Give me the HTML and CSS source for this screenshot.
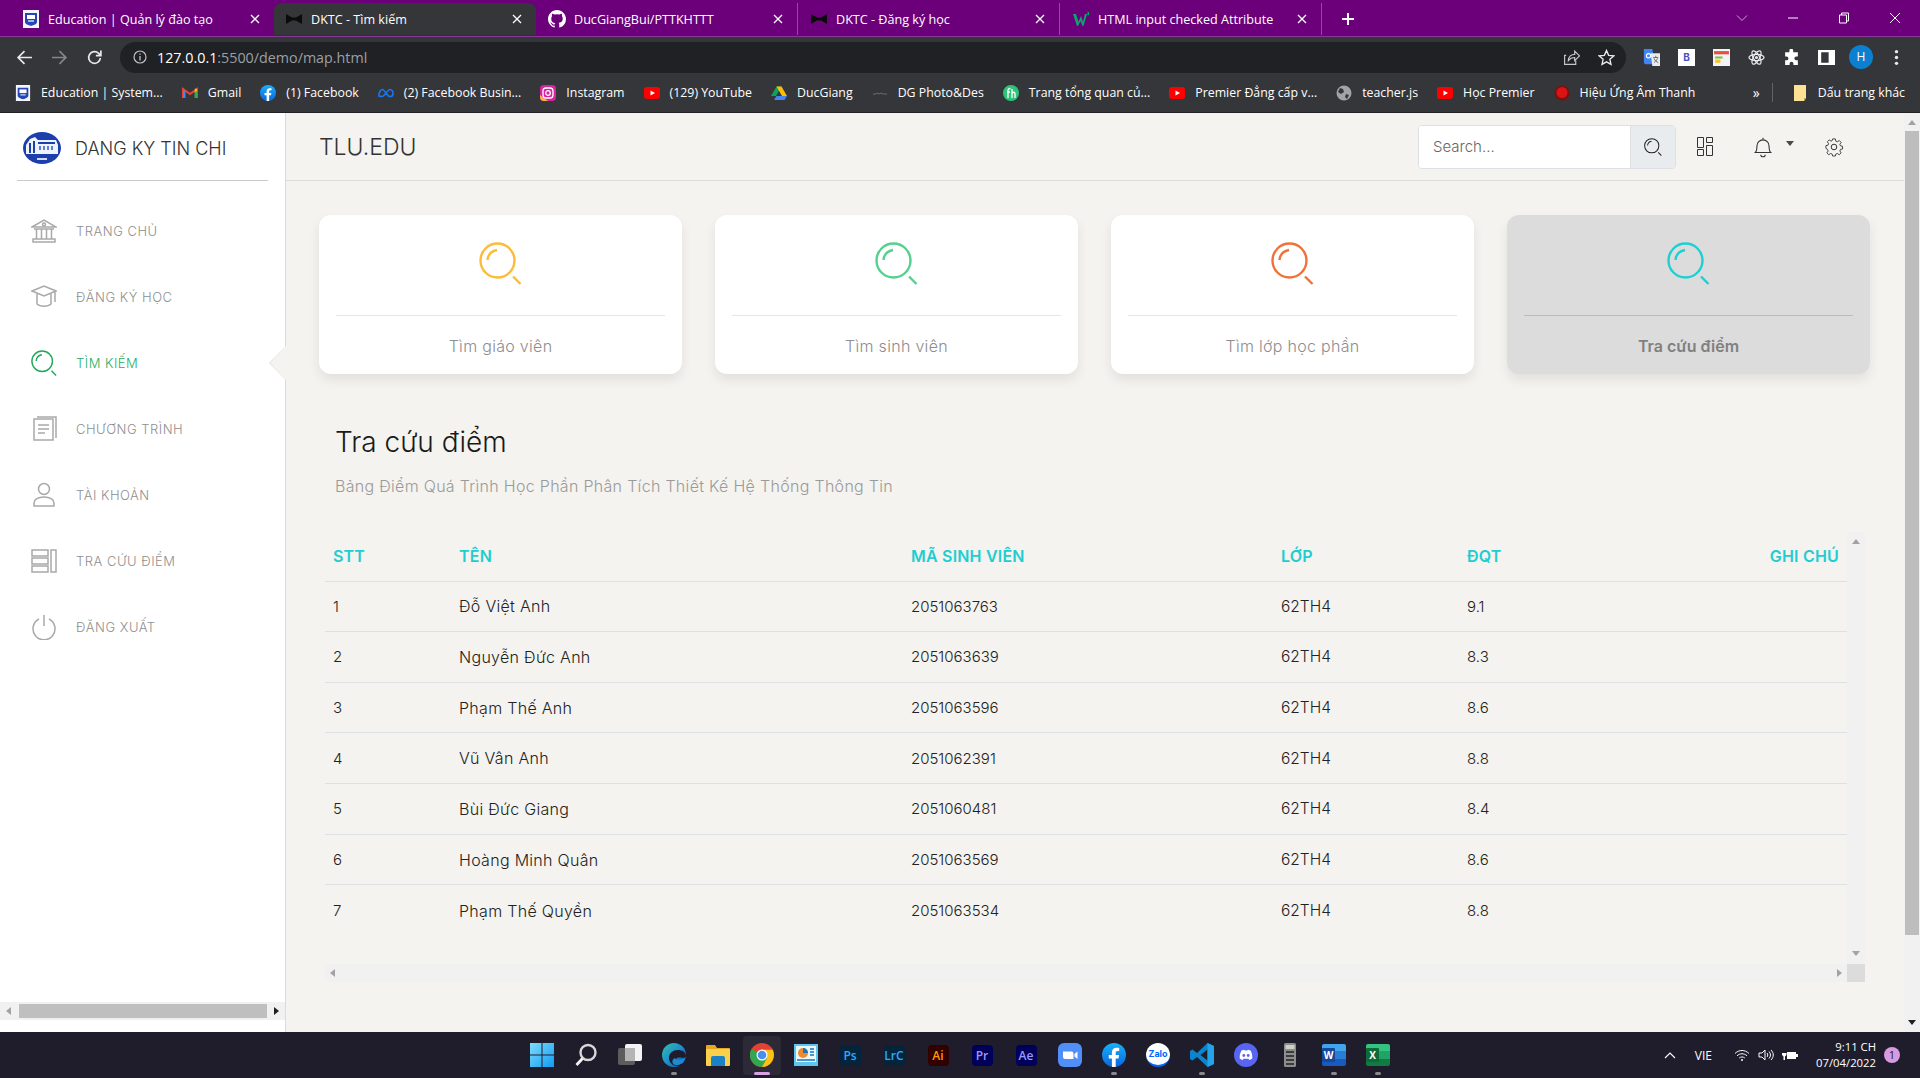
FILE: index.html
```html
<!DOCTYPE html>
<html lang="vi">
<head>
  <meta charset="UTF-8">
  <title>DKTC - Tìm kiếm</title>
  <link rel="stylesheet" href="styles.css">
</head>
<body>

  <!-- bo icon dung chung -->
  <svg class="defs" aria-hidden="true">
    <defs>
      <linearGradient id="g-win" x1="0" y1="0" x2="1" y2="1"><stop offset="0" stop-color="#7fdcff"/><stop offset="1" stop-color="#0f9bf0"/></linearGradient>
      <linearGradient id="g-edge" x1="0" y1="0" x2="1" y2="1"><stop offset="0" stop-color="#35c1a0"/><stop offset=".5" stop-color="#1c8fd0"/><stop offset="1" stop-color="#0c4f9e"/></linearGradient>
      <linearGradient id="g-fb" x1="0" y1="0" x2="0" y2="1"><stop offset="0" stop-color="#19b0f8"/><stop offset="1" stop-color="#0a66e0"/></linearGradient>
      <symbol id="i-find" viewBox="0 0 43 43"><circle cx="18.5" cy="18.5" r="17" fill="none" stroke="currentColor" stroke-width="2.400"/><path d="M8.500 18C9 13 12.500 9 18 8M34 34.500l7.500 7.500" fill="none" stroke="currentColor" stroke-width="2.400"/></symbol>
      <symbol id="i-x" viewBox="0 0 10 10"><path d="M1 1l8 8M9 1l-8 8" fill="none" stroke="currentColor" stroke-width="1.3"/></symbol>
      <symbol id="i-edu" viewBox="0 0 18 18"><rect x="1" y="0" width="16" height="18" fill="#f4f6fb"/><path d="M3 3h12v9c0 2-3 3-6 4-3-1-6-2-6-4z" fill="#2745b4"/><path d="M5 5h8v4H5z" fill="#fff"/><path d="M6 10h6v2H6z" fill="#9fb4ea"/></symbol>
      <symbol id="i-bow" viewBox="0 0 18 18"><path d="M1 4l6 3.500h4L17 4v10l-6-3.500H7L1 14z" fill="#0b0b0b"/></symbol>
      <symbol id="i-github" viewBox="0 0 16 16"><path fill="#fff" d="M8 0C3.600 0 0 3.600 0 8c0 3.500 2.300 6.500 5.500 7.600.4.100.5-.2.500-.4v-1.400c-2.200.5-2.700-1-2.700-1-.4-.9-.9-1.200-.9-1.200-.7-.5.1-.5.100-.5.800.1 1.200.8 1.200.8.700 1.200 1.900.9 2.300.7.100-.5.300-.9.500-1.100-1.800-.2-3.600-.9-3.600-4 0-.9.300-1.600.8-2.100-.1-.2-.4-1 .1-2.100 0 0 .7-.2 2.200.8a7.600 7.600 0 0 1 4 0c1.500-1 2.200-.8 2.200-.8.400 1.100.2 1.900.1 2.100.5.600.8 1.300.8 2.100 0 3.100-1.900 3.700-3.700 3.900.3.300.6.800.6 1.500v2.200c0 .2.100.5.600.4A8 8 0 0 0 16 8c0-4.400-3.600-8-8-8z"/></symbol>
      <symbol id="i-w3" viewBox="0 0 18 18"><path d="M1 4h3l2.500 8L9 6l2 6 2-8h2l-3.500 12h-1L8.500 11 6 16H5z" fill="#04aa6d"/><path d="M15.500 2h1.500v3h-1.500z" fill="#04aa6d"/></symbol>
      <symbol id="i-gmail" viewBox="0 0 16 16"><path d="M1 13V4l7 5 7-5v9" fill="none" stroke="#ea4335" stroke-width="2"/><path d="M1 5v8h2.500V6z" fill="#4285f4"/><path d="M12.500 6v7H15V5z" fill="#34a853"/><path d="M13 3.500l2 .5v2l-2.500 1.500z" fill="#fbbc04"/></symbol>
      <symbol id="i-fb" viewBox="0 0 24 24"><circle cx="12" cy="12" r="12" fill="url(#g-fb)"/><path d="M16.500 15.500l.6-3.500h-3.400V9.800c0-1 .5-1.900 2-1.900h1.500v-3s-1.400-.2-2.700-.2c-2.800 0-4.600 1.700-4.600 4.700V12H6.800v3.500h3.100V24h3.800v-8.500z" fill="#fff"/></symbol>
      <symbol id="i-meta" viewBox="0 0 18 12"><path d="M1 9c0-3 1.500-7 3.800-7C7.500 2 10.500 10 13.200 10 15.500 10 17 8.500 17 6.500S15.500 2 13.500 2C10.800 2 7.200 10 4.500 10 2.500 10 1 9.800 1 9z" fill="none" stroke="#1877f2" stroke-width="1.800"/></symbol>
      <symbol id="i-insta" viewBox="0 0 16 16"><rect width="16" height="16" rx="4" fill="#d6249f"/><path d="M0 10l8 6H4a4 4 0 0 1-4-4z" fill="#fdb13f"/><rect x="3" y="3" width="10" height="10" rx="3" fill="none" stroke="#fff" stroke-width="1.300"/><circle cx="8" cy="8" r="2.300" fill="none" stroke="#fff" stroke-width="1.300"/></symbol>
      <symbol id="i-yt" viewBox="0 0 16 16"><rect y="2" width="16" height="12" rx="3" fill="#f00"/><path d="M6.500 5.500v5L11 8z" fill="#fff"/></symbol>
      <symbol id="i-drive" viewBox="0 0 16 16"><path d="M5.500 1.500h5L5 11H0z" fill="#0fa15b"/><path d="M5.500 1.500h5L16 11h-5z" fill="#fbbc04"/><path d="M3 15l2.500-4H16l-2.500 4z" fill="#4285f4"/></symbol>
      <symbol id="i-dg" viewBox="0 0 16 16"><path d="M1 9h3l1-1 2 1 2-1 2 1h4" fill="none" stroke="#6d6d6d" stroke-width="1"/></symbol>
      <symbol id="i-fh" viewBox="0 0 16 16"><circle cx="8" cy="8" r="8" fill="#2fc37a"/><path d="M5 13V5.500C5 4 6 3.500 7.500 3.500M4 7h3M9 4v9M9 8c2-1.500 3-.5 3 1v4" fill="none" stroke="#fff" stroke-width="1.300"/></symbol>
      <symbol id="i-globe" viewBox="0 0 16 16"><circle cx="8" cy="8" r="7.500" fill="#a0a3a7"/><path d="M4 3l3 1 1 3-3 2-3-2zM10 9l3 1-2 4-2-2z" fill="#35363a"/></symbol>
      <symbol id="i-sound" viewBox="0 0 16 16"><circle cx="8" cy="8" r="7.500" fill="#7c1010"/><circle cx="8" cy="7.500" r="5.500" fill="#d81414"/></symbol>
      <symbol id="i-folder" viewBox="0 0 14 16"><path d="M1 0h9l3 0v13l-2 3H1z" fill="#fde293"/><path d="M11 16v-3h2z" fill="#c9a64a"/></symbol>
      <symbol id="i-zoom" viewBox="0 0 24 24"><rect width="24" height="24" rx="6" fill="#4f8ff7"/><path d="M5 8.500h8.500a2 2 0 0 1 2 2V16H7a2 2 0 0 1-2-2zM16.500 11l3-2.500v7.500l-3-2.500z" fill="#fff"/></symbol>
      <symbol id="i-discord" viewBox="0 0 24 24"><circle cx="12" cy="12" r="12" fill="#5865f2"/><path d="M7.500 7.500c1-.5 2-.7 2.800-.8l.3.7h2.800l.3-.7c.8.100 1.800.3 2.800.8 1.500 2.500 2 5.500 1.800 8-1 .8-2.100 1.300-3.100 1.500l-.7-1.200H9.500l-.7 1.200c-1-.2-2.100-.7-3.100-1.500-.2-2.500.3-5.500 1.800-8z" fill="#fff"/><circle cx="9.800" cy="12.500" r="1.400" fill="#5865f2"/><circle cx="14.200" cy="12.500" r="1.400" fill="#5865f2"/></symbol>
    </defs>
  </svg>

  <!-- thanh tab cua trinh duyet -->
  <div class="tabbar">
    <div class="tab"><svg class="fav"><use href="#i-edu"/></svg><span class="tab-title">Education | Quản lý đào tạo</span><svg class="tab-x"><use href="#i-x"/></svg></div>
    <div class="tab active"><svg class="fav"><use href="#i-bow"/></svg><span class="tab-title">DKTC - Tìm kiếm</span><svg class="tab-x"><use href="#i-x"/></svg></div>
    <div class="tab sep"><svg class="fav"><use href="#i-github"/></svg><span class="tab-title">DucGiangBui/PTTKHTTT</span><svg class="tab-x"><use href="#i-x"/></svg></div>
    <div class="tab sep"><svg class="fav"><use href="#i-bow"/></svg><span class="tab-title">DKTC - Đăng ký học</span><svg class="tab-x"><use href="#i-x"/></svg></div>
    <div class="tab sep"><svg class="fav"><use href="#i-w3"/></svg><span class="tab-title">HTML input checked Attribute</span><svg class="tab-x"><use href="#i-x"/></svg></div>
    <svg class="tab-plus" viewBox="0 0 14 14"><path d="M7 1v12M1 7h12" stroke="#fff" stroke-width="2"/></svg>
    <div class="win-ctl">
      <svg viewBox="0 0 12 12"><path d="M1 3.500l5 5 5-5" fill="none" stroke="#c9a6d2"/></svg>
      <svg viewBox="0 0 12 12"><path d="M1 6h10" stroke="#fff"/></svg>
      <svg viewBox="0 0 12 12"><path d="M1.500 3h7v8h-7zM3.500 3V1h7v8h-2" fill="none" stroke="#fff"/></svg>
      <svg viewBox="0 0 12 12"><path d="M1 1l10 10M11 1L1 11" fill="none" stroke="#fff"/></svg>
    </div>
  </div>

  <!-- thanh dia chi -->
  <div class="toolbar">
    <svg class="tool" viewBox="0 0 16 16"><path d="M15 8H2M8 2L2 8l6 6" fill="none" stroke="#e8eaed" stroke-width="1.600"/></svg>
    <svg class="tool" viewBox="0 0 16 16"><path d="M1 8h13M8 2l6 6-6 6" fill="none" stroke="#85878b" stroke-width="1.600"/></svg>
    <svg class="tool" viewBox="0 0 16 16"><path d="M13.500 8.500a5.500 5.500 0 1 1-1.600-4.400L14 6.200M14 1.500v4.700H9.300" fill="none" stroke="#e8eaed" stroke-width="1.600"/></svg>
    <div class="address">
      <svg class="addr-info" viewBox="0 0 14 14"><circle cx="7" cy="7" r="6" fill="none" stroke="#bdc1c6" stroke-width="1.200"/><path d="M7 6v4.500M7 3.500v1.300" stroke="#bdc1c6" stroke-width="1.300"/></svg>
      <span class="url"><b>127.0.0.1</b>:5500/demo/map.html</span>
      <svg class="tool" viewBox="0 0 16 16"><path d="M3 6H1.500v8.500H12V11M5 11c0-4 3-6 6-6V2l4.500 4.500L11 11V8c-3 0-4.500 1-6 3z" fill="none" stroke="#c4c7c5" stroke-width="1.100"/></svg>
      <svg class="tool" viewBox="0 0 16 16"><path d="M8 1.500l2 4.500 4.800.5-3.600 3.200 1 4.800L8 12.100l-4.200 2.400 1-4.800-3.600-3.200L6 6z" fill="none" stroke="#e8eaed" stroke-width="1.300"/></svg>
    </div>
    <svg class="tool" viewBox="0 0 20 20"><path d="M1 0h10l3 18H4a3 3 0 0 1-3-3z" fill="#4285f4"/><path d="M9 5h11v15H11z" fill="#e8eaed"/><circle cx="6.500" cy="8" r="2.500" fill="none" stroke="#fff" stroke-width="1.400"/><path d="M12 10h6M15 8v2M13 11c1 3 3 4 5 5M17 11c-1 3-3 4-4 5" fill="none" stroke="#5f6368"/></svg>
    <div class="tool-b">B</div>
    <svg class="tool" viewBox="0 0 16 16"><rect width="16" height="16" fill="#f1f3f4"/><path d="M1 2h14v3H1z" fill="#ea4c3f"/><path d="M2 7h7v2H2z" fill="#7cc04b"/><path d="M2 10h5v3H2z" fill="#fbc02d"/></svg>
    <svg class="tool" viewBox="0 0 18 18"><g fill="none" stroke="#e8eaed" stroke-width="1.300"><ellipse cx="9" cy="9" rx="8" ry="3.200"/><ellipse cx="9" cy="9" rx="8" ry="3.200" transform="rotate(60 9 9)"/><ellipse cx="9" cy="9" rx="8" ry="3.200" transform="rotate(120 9 9)"/></g><circle cx="9" cy="9" r="1.600" fill="#e8eaed"/></svg>
    <svg class="tool" viewBox="0 0 16 16"><path d="M6 1.500a1.800 1.800 0 0 1 3.600 0V3H14v4h-1.500a1.800 1.800 0 0 0 0 3.600H14V15H9.800v-1.300a1.800 1.800 0 0 0-3.600 0V15H2v-4.300h1.300a1.800 1.800 0 0 0 0-3.600H2V3h4z" fill="#fff"/></svg>
    <svg class="tool" viewBox="0 0 16 16"><path d="M0 1h16v14H0zM3 3v10h7V3z" fill="#fff" fill-rule="evenodd"/></svg>
    <div class="avatar-wrap"><div class="avatar">H</div></div>
    <svg class="tool" viewBox="0 0 16 16"><circle cx="8" cy="2.500" r="1.600" fill="#e8eaed"/><circle cx="8" cy="8" r="1.600" fill="#e8eaed"/><circle cx="8" cy="13.500" r="1.600" fill="#e8eaed"/></svg>
  </div>

  <!-- thanh dau trang -->
  <div class="bookmarks">
    <span class="bm"><svg class="bm-ic"><use href="#i-edu"/></svg>Education | System...</span>
    <span class="bm"><svg class="bm-ic"><use href="#i-gmail"/></svg>Gmail</span>
    <span class="bm"><svg class="bm-ic"><use href="#i-fb"/></svg>(1) Facebook</span>
    <span class="bm"><svg class="bm-ic"><use href="#i-meta"/></svg>(2) Facebook Busin...</span>
    <span class="bm"><svg class="bm-ic"><use href="#i-insta"/></svg>Instagram</span>
    <span class="bm"><svg class="bm-ic"><use href="#i-yt"/></svg>(129) YouTube</span>
    <span class="bm"><svg class="bm-ic"><use href="#i-drive"/></svg>DucGiang</span>
    <span class="bm"><svg class="bm-ic"><use href="#i-dg"/></svg>DG Photo&amp;Des</span>
    <span class="bm"><svg class="bm-ic"><use href="#i-fh"/></svg>Trang tổng quan củ...</span>
    <span class="bm"><svg class="bm-ic"><use href="#i-yt"/></svg>Premier Đẳng cấp v...</span>
    <span class="bm"><svg class="bm-ic"><use href="#i-globe"/></svg>teacher.js</span>
    <span class="bm"><svg class="bm-ic"><use href="#i-yt"/></svg>Học Premier</span>
    <span class="bm"><svg class="bm-ic"><use href="#i-sound"/></svg>Hiệu Ứng Âm Thanh</span>
    <span class="bm-more">»</span>
    <span class="bm bm-other"><svg class="bm-ic"><use href="#i-folder"/></svg>Dấu trang khác</span>
  </div>

  <main class="page">
    <aside class="sidebar">
      <div class="brand">
        <svg class="brand-logo" viewBox="0 0 38 32"><ellipse cx="19" cy="16" rx="19" ry="16" fill="#1d3fae"/><path d="M3 22V13l4-6 5-2 3 3h18l2 5v9z" fill="#eef2fb"/><path d="M6 11h2v10H6zM10 9h2v12h-2z" fill="#1d3fae"/><path d="M15 10h17v2H15z" fill="#1d3fae"/><path d="M16 14h2v4h-2zM20 14h2v4h-2zM24 14h2v4h-2zM28 14h2v4h-2z" fill="#5f7fd6"/><path d="M14 26h10v2H14z" fill="#cfd8f4"/></svg>
        <span class="brand-name">DANG KY TIN CHI</span>
      </div>
      <nav class="menu">
        <a class="menu-item"><svg class="menu-ic" viewBox="0 0 26 26"><path d="M1 9l12-7 12 7zM3 11h20M5.500 11v10M10.500 11v10M15.500 11v10M20.500 11v10M2 21h22v3H2z"/><circle cx="13" cy="6.500" r="1.500"/></svg>TRANG CHỦ</a>
        <a class="menu-item"><svg class="menu-ic" viewBox="0 0 26 26"><path d="M1 7l12-5 12 5-12 5zM6 10v10c3 3 11 3 14 0V10M24 8v10"/></svg>ĐĂNG KÝ HỌC</a>
        <a class="menu-item active"><svg class="menu-ic" viewBox="0 0 26 26"><use href="#i-find"/></svg>TÌM KIẾM</a>
        <a class="menu-item"><svg class="menu-ic" viewBox="0 0 26 26"><path d="M3 3h19v21H3zM6 1h19v21M7 9h11M7 13h11M7 17h7"/></svg>CHƯƠNG TRÌNH</a>
        <a class="menu-item"><svg class="menu-ic" viewBox="0 0 26 26"><circle cx="13" cy="7" r="5.500"/><path d="M3 24v-3c0-3.500 4-6 10-6s10 2.500 10 6v3z"/></svg>TÀI KHOẢN</a>
        <a class="menu-item"><svg class="menu-ic" viewBox="0 0 26 26"><path d="M1 2h16v6H1zM1 10h16v6H1zM1 18h16v6H1zM20 2h5v22h-5z"/></svg>TRA CỨU ĐIỂM</a>
        <a class="menu-item"><svg class="menu-ic" viewBox="0 0 26 26"><path d="M8 5a11 11 0 1 0 10 0M13 1v11"/></svg>ĐĂNG XUẤT</a>
      </nav>
      <div class="hbar hbar-side">
        <i class="arr arr-left"></i>
        <div class="hbar-thumb"></div>
        <i class="arr arr-right dark"></i>
      </div>
    </aside>

    <div class="panel">
      <header class="topbar">
        <div class="top-title">TLU.EDU</div>
        <div class="search">
          <input class="search-input" placeholder="Search...">
          <span class="search-btn"><svg viewBox="0 0 43 43"><use href="#i-find"/></svg></span>
        </div>
        <svg class="top-ic ic-layout" viewBox="0 0 16 19"><path d="M.5.500h6v10h-6zM.5 12.500h6v6h-6zM9.500.500h6v5h-6zM9.500 8.500h6v10h-6z" fill="none" stroke="#333"/></svg>
        <svg class="top-ic ic-bell" viewBox="0 0 18 20"><path d="M2 15c1.500-1.500 1.500-3 1.500-6a5.500 5.500 0 0 1 11 0c0 3 0 4.500 1.500 6zM7 17c0 2.500 4 2.500 4 0M9 3.500V1.500" fill="none" stroke="#333"/></svg>
        <i class="caret"></i>
        <svg class="top-ic ic-gear" viewBox="0 0 20 20"><circle cx="10" cy="10" r="2.800" fill="none" stroke="#333"/><path d="M8.500 1h3l.5 2.500 1.700.7 2.100-1.400 2.100 2.100-1.400 2.100.7 1.700 2.300.5v3l-2.300.5-.7 1.700 1.400 2.100-2.100 2.100-2.100-1.400-1.700.7-.5 2.100h-3l-.5-2.100-1.700-.7-2.100 1.400-2.100-2.100 1.400-2.100-.7-1.700L1 11.500v-3l2.300-.5.7-1.700L2.600 4.200l2.100-2.100 2.100 1.400 1.200-.7z" fill="none" stroke="#333" transform="translate(1 1) scale(.9)"/></svg>
      </header>

      <section class="cards">
        <div class="card yellow"><div class="card-icon"><svg viewBox="0 0 43 43"><use href="#i-find"/></svg></div><div class="card-label">Tìm giáo viên</div></div>
        <div class="card green"><div class="card-icon"><svg viewBox="0 0 43 43"><use href="#i-find"/></svg></div><div class="card-label">Tìm sinh viên</div></div>
        <div class="card orange"><div class="card-icon"><svg viewBox="0 0 43 43"><use href="#i-find"/></svg></div><div class="card-label">Tìm lớp học phần</div></div>
        <div class="card cyan selected"><div class="card-icon"><svg viewBox="0 0 43 43"><use href="#i-find"/></svg></div><div class="card-label">Tra cứu điểm</div></div>
      </section>

      <section class="result">
        <h2 class="result-title">Tra cứu điểm</h2>
        <p class="result-sub">Bảng Điểm Quá Trình Học Phần Phân Tích Thiết Kế Hệ Thống Thông Tin</p>
        <div class="table-box">
          <table class="score">
            <thead>
              <tr><th class="c-stt">STT</th><th class="c-ten">TÊN</th><th class="c-msv">MÃ SINH VIÊN</th><th class="c-lop">LỚP</th><th class="c-dqt">ĐQT</th><th class="c-note">GHI CHÚ</th></tr>
            </thead>
            <tbody>
              <tr><td>1</td><td class="name">Đỗ Việt Anh</td><td>2051063763</td><td class="cls">62TH4</td><td>9.1</td><td></td></tr>
              <tr><td>2</td><td class="name">Nguyễn Đức Anh</td><td>2051063639</td><td class="cls">62TH4</td><td>8.3</td><td></td></tr>
              <tr><td>3</td><td class="name">Phạm Thế Anh</td><td>2051063596</td><td class="cls">62TH4</td><td>8.6</td><td></td></tr>
              <tr><td>4</td><td class="name">Vũ Vân Anh</td><td>2051062391</td><td class="cls">62TH4</td><td>8.8</td><td></td></tr>
              <tr><td>5</td><td class="name">Bùi Đức Giang</td><td>2051060481</td><td class="cls">62TH4</td><td>8.4</td><td></td></tr>
              <tr><td>6</td><td class="name">Hoàng Minh Quân</td><td>2051063569</td><td class="cls">62TH4</td><td>8.6</td><td></td></tr>
              <tr class="last"><td>7</td><td class="name">Phạm Thế Quyền</td><td>2051063534</td><td class="cls">62TH4</td><td>8.8</td><td></td></tr>
            </tbody>
          </table>
          <div class="vbar"><i class="arr arr-up"></i><i class="arr arr-down"></i></div>
          <div class="hbar hbar-table"><i class="arr arr-left"></i><i class="arr arr-right"></i></div>
          <div class="corner"></div>
        </div>
      </section>
    </div>

    <div class="page-scroll">
      <i class="arr arr-up"></i>
      <div class="page-thumb"></div>
      <i class="arr arr-down dark"></i>
    </div>
  </main>

  <!-- thanh tac vu windows -->
  <footer class="taskbar">
    <div></div>
    <div class="task-apps">
      <span class="app"><svg viewBox="0 0 24 24"><path d="M0 0h11.500v11.500H0zM12.500 0H24v11.500H12.500zM0 12.500h11.500V24H0zM12.500 12.500H24V24H12.500z" fill="url(#g-win)"/></svg></span>
      <span class="app"><svg viewBox="0 0 24 24"><circle cx="14" cy="9.500" r="7.500" fill="none" stroke="#d8d8d8" stroke-width="2.400"/><path d="M8.500 15.500L2.500 22" stroke="#f4f4f4" stroke-width="2.800"/></svg></span>
      <span class="app"><svg viewBox="0 0 24 24"><rect x="0" y="5" width="17" height="17" rx="2" fill="#5d5d5d"/><rect x="7" y="1" width="17" height="17" rx="2" fill="#f3f3f3"/><rect x="7" y="5" width="10" height="13" fill="#b4b4b4"/></svg></span>
      <span class="app on"><svg viewBox="0 0 24 24"><circle cx="12" cy="12" r="12" fill="url(#g-edge)"/><path d="M24 13c0-4-4-6-8-6-5 0-9 3-9 8 0 3 2 7 7 8 4 .5 7-1 9-3-3 1.500-8 1-8.500-3-.2-1.500.5-2.500 2-2.500 2 0 7 1.500 7.500-1.500z" fill="#1f1c2c"/><path d="M13 15c1 2 5 3 10 0-1 5-6 8-10 7-3-1-4-5 0-7z" fill="#1e8ad2"/></svg></span>
      <span class="app"><svg viewBox="0 0 24 24"><path d="M0 3a1 1 0 0 1 1-1h8l2 3h12a1 1 0 0 1 1 1v3H0z" fill="#e6a823"/><path d="M0 6h24v16a1 1 0 0 1-1 1H1a1 1 0 0 1-1-1z" fill="#fbd14b"/><path d="M5 15a2 2 0 0 1 2-2h10a2 2 0 0 1 2 2v8H5z" fill="#1b82c8"/></svg></span>
      <span class="app chrome"><svg viewBox="0 0 24 24"><circle cx="12" cy="12" r="12" fill="#e34133"/><path d="M12 12L1.600 6A12 12 0 0 0 12 24l5.200-9z" fill="#2fa84f"/><path d="M12 6.700h10.700A12 12 0 0 1 12 24l5-9z" fill="#fbc116"/><circle cx="12" cy="12" r="5.500" fill="#fff"/><circle cx="12" cy="12" r="4.300" fill="#4a8df0"/></svg></span>
      <span class="app"><svg viewBox="0 0 24 24"><rect y="1" width="24" height="22" fill="#5cc6ee"/><rect x="2" y="3" width="20" height="16" fill="#e9f6fc"/><circle cx="9" cy="10" r="5" fill="#ef8b2c"/><path d="M9 10V5a5 5 0 0 1 5 5z" fill="#1976b8"/><path d="M16 6h4M16 9h4M16 12h4M3 17h18" stroke="#1976b8" stroke-width="1.400"/></svg></span>
      <span class="app"><span class="tile t-ps">Ps</span></span>
      <span class="app"><span class="tile t-lr">LrC</span></span>
      <span class="app"><span class="tile t-ai">Ai</span></span>
      <span class="app"><span class="tile t-pr">Pr</span></span>
      <span class="app"><span class="tile t-ae">Ae</span></span>
      <span class="app"><svg viewBox="0 0 24 24"><use href="#i-zoom"/></svg></span>
      <span class="app on"><svg viewBox="0 0 24 24"><use href="#i-fb"/></svg></span>
      <span class="app"><span class="zalo">Zalo</span></span>
      <span class="app on"><svg viewBox="0 0 24 24"><path d="M17.500 0L24 3v18l-6.500 3L7 14l-4.500 3.500L0 16v-8l2.500-1.500L7 10zM17.500 6.500L10.500 12l7 5.500z" fill="#0a84cc"/><path d="M17.500 0L24 3v18l-6.500 3z" fill="#23a4ea"/></svg></span>
      <span class="app"><svg viewBox="0 0 24 24"><use href="#i-discord"/></svg></span>
      <span class="app"><svg viewBox="0 0 24 24"><rect x="6" y="0" width="12" height="24" rx="1.500" fill="#8d8d8d"/><rect x="7.500" y="2" width="9" height="4" fill="#c9d2c4"/><path d="M8 8h8v2H8zM8 12h8v2H8zM8 16h8v2H8zM8 20h8v2H8z" fill="#3c3c3c"/></svg></span>
      <span class="app on"><span class="office word"><b>W</b></span></span>
      <span class="app on"><span class="office excel"><b>X</b></span></span>
    </div>
    <div class="tray">
      <svg class="tray-up" viewBox="0 0 12 7"><path d="M1 6l5-5 5 5" fill="none" stroke="#fff" stroke-width="1.100"/></svg>
      <span class="tray-lang">VIE</span>
      <svg class="tray-wifi" viewBox="0 0 16 12"><path d="M1 4.500c4-4 10-4 14 0M3 6.800c3-2.700 7-2.700 10 0M5.200 9c1.700-1.400 3.900-1.400 5.600 0" fill="none" stroke="#fff" stroke-width="1"/><circle cx="8" cy="11" r="1" fill="#fff"/></svg>
      <svg class="tray-vol" viewBox="0 0 16 12"><path d="M1 4h3l3-3v10L4 8H1zM9 4c1 1 1 3 0 4M11 2.500c2 2 2 5 0 7M13 1c3 3 3 7 0 10" fill="none" stroke="#fff"/></svg>
      <svg class="tray-bat" viewBox="0 0 16 12"><path d="M5 3h9v7H5z" fill="#fff"/><path d="M14 5h2v3h-2zM1 1v3M3.500 1v3M0 4h4.500v2l-1.500 1.500V11H1.500V7.500L0 6z" fill="#fff"/></svg>
      <div class="clock"><div>9:11 CH</div><div>07/04/2022</div></div>
      <span class="badge">1</span>
    </div>
  </footer>

</body>
</html>
```

FILE: styles.css
```css
* {
  box-sizing: border-box;
}

body {
  margin: 0;
  width: 1920px;
  height: 1078px;
  overflow: hidden;
  display: flex;
  flex-direction: column;
  font-family: Inter, "Noto Sans", sans-serif;
  background-color: #f4f3ef;
}

.defs {
  position: absolute;
  width: 0;
  height: 0;
}

svg {
  display: block;
}

/* ---- tabs ---- */
.tabbar {
  height: 37px;
  flex: none;
  display: flex;
  align-items: flex-end;
  padding: 0 0 1px 12px;
  background-color: #6b007a;
  border-bottom: 1px solid #8a3a96;
  font-family: "Open Sans", sans-serif;
  font-size: 12.600px;
  color: #fff;
}

.tab {
  width: 262px;
  height: 32px;
  display: flex;
  align-items: center;
  padding: 0 14px 0 10px;
}

.tab.active {
  padding-left: 11px;
  background-color: #35363a;
  border-radius: 8px 8px 0 0;
}

.tab.sep {
  padding-left: 12px;
  border-right: 1px solid #8f4c9b;
}

.fav {
  width: 18px;
  height: 18px;
  flex: none;
  margin-right: 8px;
}

.tab-title {
  flex: 1;
  white-space: nowrap;
}

.tab-x {
  width: 10px;
  height: 10px;
  color: #fff;
}

.tab-plus {
  width: 14px;
  height: 14px;
  margin: 0 0 9px 19px;
}

.win-ctl {
  margin-left: auto;
  display: flex;
  align-self: center;
}

.win-ctl svg {
  width: 12px;
  height: 12px;
  margin: 0 19.500px;
}

/* ---- toolbar ---- */
.toolbar {
  height: 40px;
  flex: none;
  display: flex;
  align-items: center;
  padding: 0 6px 0 7px;
  background-color: #35363a;
}

.tool {
  width: 17px;
  height: 17px;
  margin: 0 9px;
  flex: none;
}

.address {
  flex: 1;
  height: 31px;
  margin: 0 8px;
  display: flex;
  align-items: center;
  padding: 0 2px 0 13px;
  background-color: #202124;
  border-radius: 16px;
}

.addr-info {
  width: 14px;
  height: 14px;
  margin-right: 10px;
}

.url {
  flex: 1;
  font-family: "Open Sans", sans-serif;
  font-size: 14.300px;
  color: #9aa0a6;
}

.url b {
  font-weight: 400;
  color: #fff;
}

.tool-b {
  width: 17px;
  height: 17px;
  margin: 0 9px;
  flex: none;
  background-color: #fff;
  color: #4b50b8;
  font-size: 10px;
  font-weight: 700;
  line-height: 17px;
  text-align: center;
}

.avatar-wrap {
  width: 35px;
  flex: none;
}

.avatar {
  width: 24px;
  height: 24px;
  margin-left: 5px;
  border-radius: 50%;
  background-color: #0b80d0;
  color: #fff;
  font-family: "Open Sans", sans-serif;
  font-size: 12px;
  line-height: 24px;
  text-align: center;
}

/* ---- bookmarks ---- */
.bookmarks {
  height: 36px;
  flex: none;
  display: flex;
  align-items: center;
  gap: 19px;
  padding: 0 15px 4px 15px;
  background-color: #35363a;
  border-bottom: 1px solid #202124;
  font-family: "Open Sans", sans-serif;
  font-size: 12.350px;
  color: #fff;
}

.bm {
  display: flex;
  align-items: center;
  white-space: nowrap;
}

.bm-ic {
  width: 16px;
  height: 16px;
  margin-right: 10px;
  flex: none;
}

.bm-more {
  margin-left: auto;
  padding-right: 12px;
  border-right: 1px solid #5f6368;
  font-size: 14px;
}

/* ---- page ---- */
.page {
  flex: 1;
  min-height: 0;
  display: flex;
}

.sidebar {
  width: 286px;
  flex: none;
  display: flex;
  flex-direction: column;
  background-color: #fff;
  border-right: 1px solid #dcdbd7;
}

.brand {
  height: 68px;
  flex: none;
  margin: 0 17px;
  display: flex;
  align-items: center;
  padding: 2px 0 0 6px;
  border-bottom: 1px solid #c9c9c9;
}

.brand-logo {
  width: 38px;
  height: 32px;
  margin-right: 14px;
}

.brand-name {
  padding-top: 2px;
  font-size: 18px;
  font-weight: 300;
  color: #333;
  white-space: nowrap;
}

.menu {
  padding-top: 17px;
}

.menu-item {
  position: relative;
  height: 66px;
  display: flex;
  align-items: center;
  padding-left: 31px;
  font-size: 13px;
  font-weight: 300;
  letter-spacing: 0.500px;
  color: #8f8f8f;
}

.menu-ic {
  width: 26px;
  height: 26px;
  margin-right: 19px;
  fill: none;
  stroke: #a9a9a9;
  stroke-width: 1.500;
}

.menu-item.active {
  color: #27ae60;
}

.menu-item.active .menu-ic {
  color: #1ea85a;
  stroke: none;
}

.menu-item.active::before,
.menu-item.active::after {
  content: "";
  position: absolute;
  top: 16px;
  height: 34px;
  clip-path: polygon(100% 0, 0 50%, 100% 100%);
}

.menu-item.active::before {
  right: -1px;
  width: 17px;
  background-color: #dcdbd7;
}

.menu-item.active::after {
  right: -1px;
  width: 16px;
  background-color: #f4f3ef;
}

/* scrollbars ve tay */
.hbar {
  height: 18px;
  flex: none;
  display: flex;
  align-items: center;
  justify-content: space-between;
  padding: 0 5px;
  background-color: #f1f1f1;
}

.hbar-side {
  margin-top: auto;
  margin-bottom: 12px;
  padding: 0 6px;
}

.hbar-thumb {
  width: 248px;
  height: 14px;
  background-color: #bfbfbf;
}

.arr {
  display: block;
  width: 0;
  height: 0;
  border: 4px solid transparent;
}

.arr-left {
  border-left-width: 0;
  border-right: 5px solid #a3a3a3;
}

.arr-right {
  border-right-width: 0;
  border-left: 5px solid #a3a3a3;
}

.arr-up {
  border-top-width: 0;
  border-bottom: 5px solid #a3a3a3;
}

.arr-down {
  border-bottom-width: 0;
  border-top: 5px solid #a3a3a3;
}

.arr-right.dark {
  border-left-color: #202020;
}

.arr-down.dark {
  border-top-color: #202020;
}

.panel {
  flex: 1;
  min-width: 0;
}

.topbar {
  height: 68px;
  display: flex;
  align-items: center;
  padding: 0 60px 0 33px;
  border-bottom: 1px solid #dedcd8;
}

.top-title {
  font-size: 23px;
  font-weight: 300;
  color: #333;
  margin-right: auto;
}

.search {
  width: 258px;
  height: 44px;
  display: flex;
  background-color: #fff;
  border: 1px solid #dde0e3;
  border-radius: 4px;
  overflow: hidden;
}

.search-input {
  flex: 1;
  min-width: 0;
  border: none;
  outline: none;
  padding: 0 14px;
  font-family: Inter, sans-serif;
  font-size: 15px;
  font-weight: 300;
}

.search-input::placeholder {
  color: #666;
}

.search-btn {
  width: 45px;
  display: flex;
  align-items: center;
  justify-content: center;
  background-color: #e9ecef;
  border-left: 1px solid #dde0e3;
  color: #222;
}

.search-btn svg {
  width: 18px;
  height: 18px;
}

.ic-layout {
  width: 16px;
  height: 19px;
  margin-left: 21px;
}

.ic-bell {
  width: 20px;
  height: 22px;
  margin-left: 40px;
}

.caret {
  width: 0;
  height: 0;
  margin: 0 0 6px 13px;
  border: 4.500px solid transparent;
  border-bottom-width: 0;
  border-top: 5px solid #4a4a4a;
}

.ic-gear {
  width: 20px;
  height: 20px;
  margin-left: 30px;
}

.cards {
  display: grid;
  grid-template-columns: repeat(4, 1fr);
  gap: 33px;
  padding: 34px 34px 0 33px;
}

.card {
  height: 159px;
  padding: 0 17px;
  background-color: #fff;
  border-radius: 12px;
  box-shadow: 0 6px 12px rgba(0, 0, 0, 0.08);
}

.card.selected {
  background-color: #dcdcdc;
}

.card-icon {
  height: 101px;
  padding-top: 27px;
  display: flex;
  justify-content: center;
  border-bottom: 1px solid #e5e5e5;
}

.card-icon svg {
  width: 43px;
  height: 43px;
}

.selected .card-icon {
  border-bottom-color: #bbb;
}

.card-label {
  text-align: center;
  line-height: 60px;
  font-size: 16px;
  font-weight: 300;
  letter-spacing: 0.300px;
  color: #8d8d8d;
}

.selected .card-label {
  font-weight: 600;
  letter-spacing: 0;
  color: #808080;
}

.yellow {
  color: #fcbc3a;
}

.green {
  color: #55d08f;
}

.orange {
  color: #ef723a;
}

.cyan {
  color: #1fcfd2;
}

.result {
  padding: 50px 0 0 39px;
}

.result-title {
  margin: 0 0 15px 10px;
  font-size: 28px;
  line-height: 36px;
  font-weight: 300;
  color: #1a1a1a;
}

.result-sub {
  margin: 0 0 35px 10px;
  font-size: 16px;
  line-height: 22px;
  font-weight: 300;
  letter-spacing: 0.300px;
  color: #9a9a9a;
}

.table-box {
  width: 1540px;
  display: grid;
  grid-template-columns: 1522px 18px;
  grid-template-rows: 432px 18px;
}

.score {
  align-self: start;
  width: 1522px;
  border-collapse: collapse;
  table-layout: fixed;
  font-size: 15px;
  font-weight: 300;
  color: #222;
}

.score th {
  height: 49px;
  padding: 0 8px;
  text-align: left;
  font-size: 16px;
  font-weight: 600;
  letter-spacing: 0.200px;
  color: #1fcdd0;
  border-bottom: 1px solid #dde0e4;
}

.score td {
  height: 50.670px;
  padding: 0 8px;
  border-bottom: 1px solid #dde0e4;
}

.score .name {
  font-size: 16px;
  letter-spacing: 0.300px;
}

.score .cls {
  font-size: 15.500px;
}

.score .last td {
  border-bottom: none;
}

.c-stt {
  width: 126px;
}

.c-ten {
  width: 452px;
}

.c-msv {
  width: 370px;
}

.c-lop {
  width: 186px;
}

.score .c-note {
  text-align: right;
}

.vbar {
  display: flex;
  flex-direction: column;
  justify-content: space-between;
  align-items: center;
  padding: 7px 0 8px;
  background-color: #f1f1f1;
}

.hbar-table {
  padding: 0 5px;
}

.corner {
  background-color: #dcdcdc;
}

.page-scroll {
  width: 16px;
  flex: none;
  display: flex;
  flex-direction: column;
  align-items: center;
  padding: 7px 0;
  background-color: #f1f1f1;
}

.page-thumb {
  width: 14px;
  height: 804px;
  margin-top: 6px;
  margin-bottom: auto;
  background-color: #bdbdbd;
}

/* ---- taskbar ---- */
.taskbar {
  height: 46px;
  flex: none;
  display: grid;
  grid-template-columns: 1fr auto 1fr;
  align-items: center;
  background-color: #1f1c2c;
  color: #fff;
}

.task-apps {
  display: flex;
}

.app {
  position: relative;
  width: 44px;
  height: 46px;
  display: flex;
  align-items: center;
  justify-content: center;
}

.app svg {
  width: 24px;
  height: 24px;
}

.app.on::after {
  content: "";
  position: absolute;
  left: 19px;
  bottom: 3px;
  width: 6px;
  height: 3px;
  border-radius: 2px;
  background-color: #8a8a8a;
}

.app.chrome::before {
  content: "";
  position: absolute;
  left: 3px;
  top: 4px;
  width: 38px;
  height: 39px;
  border-radius: 4px;
  background-color: #2d2a38;
}

.app.chrome svg {
  position: relative;
}

.app.chrome::after {
  content: "";
  position: absolute;
  left: 14px;
  bottom: 3px;
  width: 16px;
  height: 3px;
  border-radius: 2px;
  background-color: #d9a0e3;
}

.tile {
  width: 21px;
  height: 21px;
  border-radius: 4px;
  font-size: 12px;
  font-weight: 600;
  line-height: 21px;
  text-align: center;
  font-family: "Open Sans", sans-serif;
}

.t-ps {
  background-color: #04243c;
  color: #31a8ff;
}

.t-lr {
  background-color: #04243c;
  color: #31a8ff;
}

.t-ai {
  background-color: #330000;
  color: #ff9a00;
}

.t-pr {
  background-color: #00005b;
  color: #9999ff;
}

.t-ae {
  background-color: #00005b;
  color: #9999ff;
}

.zalo {
  width: 24px;
  height: 24px;
  border-radius: 50%;
  background-color: #fff;
  border-bottom: 2px solid #0068ff;
  color: #0068ff;
  font-size: 9px;
  font-weight: 700;
  line-height: 22px;
  text-align: center;
}

.office {
  position: relative;
  width: 24px;
  height: 22px;
  border-radius: 2px;
  overflow: hidden;
}

.office b {
  position: absolute;
  left: 0;
  top: 4px;
  width: 13px;
  height: 14px;
  border-radius: 1px;
  color: #fff;
  font-family: "Open Sans", sans-serif;
  font-size: 10px;
  line-height: 14px;
  text-align: center;
}

.word {
  background: linear-gradient(#41a5ee 33%, #2b7cd3 33%, #2b7cd3 66%, #185abd 66%);
}

.word b {
  background-color: #134a9c;
}

.excel {
  background: linear-gradient(#33c481 33%, #21a366 33%, #21a366 66%, #107c41 66%);
}

.excel b {
  background-color: #0e6a38;
}

.tray {
  display: flex;
  align-items: center;
  justify-content: flex-end;
  padding-right: 20px;
  font-family: "Open Sans", sans-serif;
  font-size: 11.300px;
}

.tray-up {
  width: 12px;
  height: 7px;
}

.tray-lang {
  margin-left: 19px;
  font-size: 12px;
}

.tray-wifi,
.tray-vol,
.tray-bat {
  width: 16px;
  height: 12px;
  margin-left: 8px;
}

.tray-wifi {
  margin-left: 22px;
}

.clock {
  margin-left: 18px;
  line-height: 16px;
  text-align: right;
}

.badge {
  width: 16px;
  height: 16px;
  margin-left: 8px;
  border-radius: 50%;
  background-color: #d69be0;
  color: #222;
  font-size: 11px;
  line-height: 16px;
  text-align: center;
}
```
